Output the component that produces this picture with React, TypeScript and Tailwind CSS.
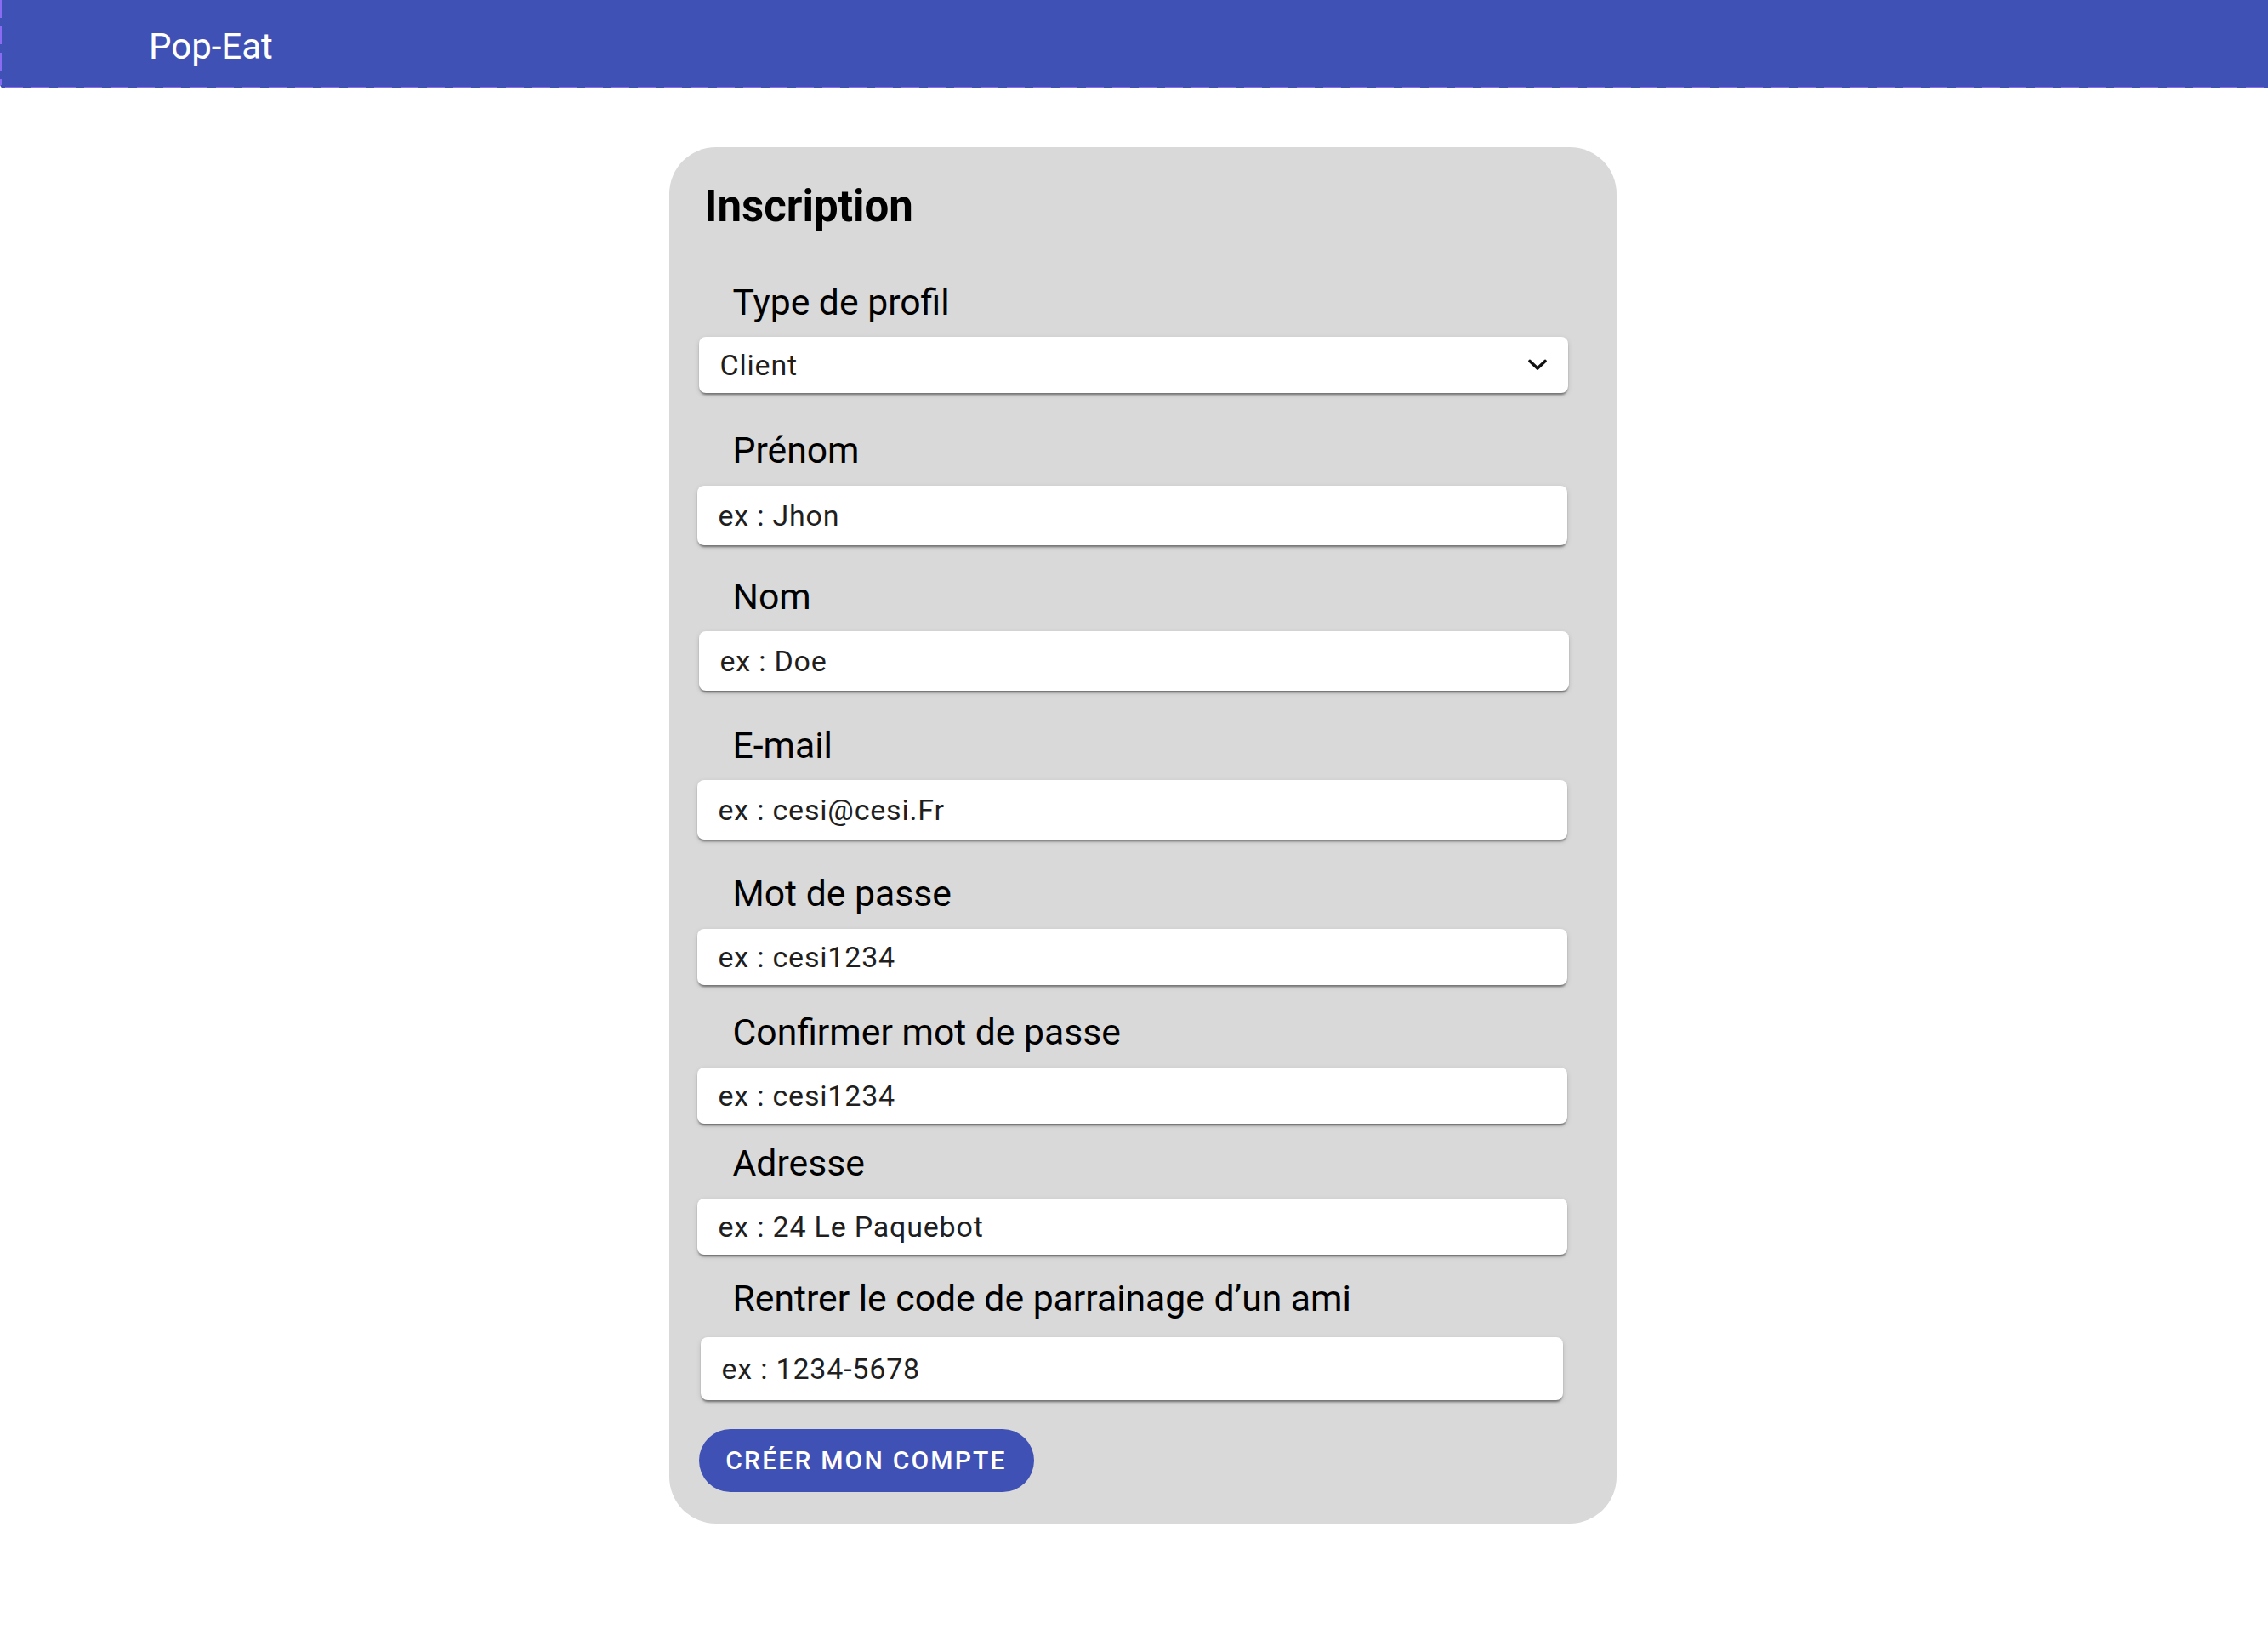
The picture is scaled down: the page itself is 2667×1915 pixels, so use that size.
import React from "react";

const fields = [
  {
    label: "Type de profil",
    value: "Client",
    select: true,
    labelCls: "mt-[57px]",
    boxCls: "mt-[16px] h-[66px] ml-[35px] w-[1022px]",
  },
  {
    label: "Prénom",
    value: "ex : Jhon",
    labelCls: "mt-[42px]",
    boxCls: "mt-[17px] h-[70px] ml-[33px] w-[1023px]",
  },
  {
    label: "Nom",
    value: "ex : Doe",
    labelCls: "mt-[35px]",
    boxCls: "mt-[16px] h-[70px] ml-[35px] w-[1023px]",
  },
  {
    label: "E-mail",
    value: "ex : cesi@cesi.Fr",
    labelCls: "mt-[39px]",
    boxCls: "mt-[16px] h-[70px] ml-[33px] w-[1023px]",
  },
  {
    label: "Mot de passe",
    value: "ex : cesi1234",
    labelCls: "mt-[38px]",
    boxCls: "mt-[17px] h-[66px] ml-[33px] w-[1023px]",
  },
  {
    label: "Confirmer mot de passe",
    value: "ex : cesi1234",
    labelCls: "mt-[30px]",
    boxCls: "mt-[17px] h-[66px] ml-[33px] w-[1023px]",
  },
  {
    label: "Adresse",
    value: "ex : 24 Le Paquebot",
    labelCls: "mt-[21px]",
    boxCls: "mt-[17px] h-[66px] ml-[33px] w-[1023px]",
  },
  {
    label: "Rentrer le code de parrainage d’un ami",
    value: "ex : 1234-5678",
    labelCls: "mt-[26px]",
    boxCls: "mt-[21px] h-[74px] ml-[37px] w-[1014px]",
  },
];

const Chevron = () => (
  <svg width="22" height="14" viewBox="0 0 22 14" fill="none">
    <path
      d="M2 2.5 L11 11 L20 2.5"
      stroke="#111"
      strokeWidth="3.6"
      strokeLinecap="round"
      strokeLinejoin="round"
    />
  </svg>
);

const App = () => {
  return (
    <div className="min-h-screen bg-white font-['Roboto',sans-serif]">
      {/* app bar */}
      <header className="relative flex h-[104px] flex-col bg-[#3f51b5] rounded-bl-[5px]">
        <div className="flex flex-1 items-center pl-[175px] pt-[8px]">
          <span className="text-[42px] leading-[50px] text-white">Pop-Eat</span>
        </div>
        <div className="h-[2px] bg-[repeating-linear-gradient(90deg,#8a6cf2_0_21px,#3f51b5_21px_31px)] ml-[6px]" />
        <div className="absolute left-0 top-0 bottom-[4px] w-[2px] bg-[repeating-linear-gradient(180deg,#8a6cf2_0_21px,#3f51b5_21px_31px)]" />
      </header>

      <div className="flex justify-center pl-[20px] pt-[69px] pb-[100px]">
        <div className="flex w-[1114px] flex-col rounded-[55px] bg-[#d9d9d9] pt-[40px] pb-[37px]">
          <h1 className="ml-[42px] text-[51px] leading-[60px] font-bold text-black">
            Inscription
          </h1>

          {fields.map((f, idx) => (
            <div key={idx} className="flex flex-col">
              <label className={`${f.labelCls} ml-[75px] text-[42.7px] leading-[50px] text-black`}>
                {f.label}
              </label>
              <div
                className={`${f.boxCls} flex items-center justify-between rounded-[8px] bg-white pl-[25px] pr-[25px] shadow-[0_4px_3px_-2px_rgba(0,0,0,0.35),0_2px_2px_rgba(0,0,0,0.14),0_2px_6px_rgba(0,0,0,0.12)]`}
              >
                <span className="text-[34px] leading-[40px] tracking-[0.8px] text-[#1f1f1f]">
                  {f.value}
                </span>
                {f.select && <Chevron />}
              </div>
            </div>
          ))}

          <button className="mt-[34px] ml-[35px] flex h-[74px] w-[394px] items-center justify-center rounded-full bg-[#3f51b5] text-[30px] leading-[36px] font-medium tracking-[2.2px] text-white">
            CRÉER MON COMPTE
          </button>
        </div>
      </div>
    </div>
  );
};

export default App;
